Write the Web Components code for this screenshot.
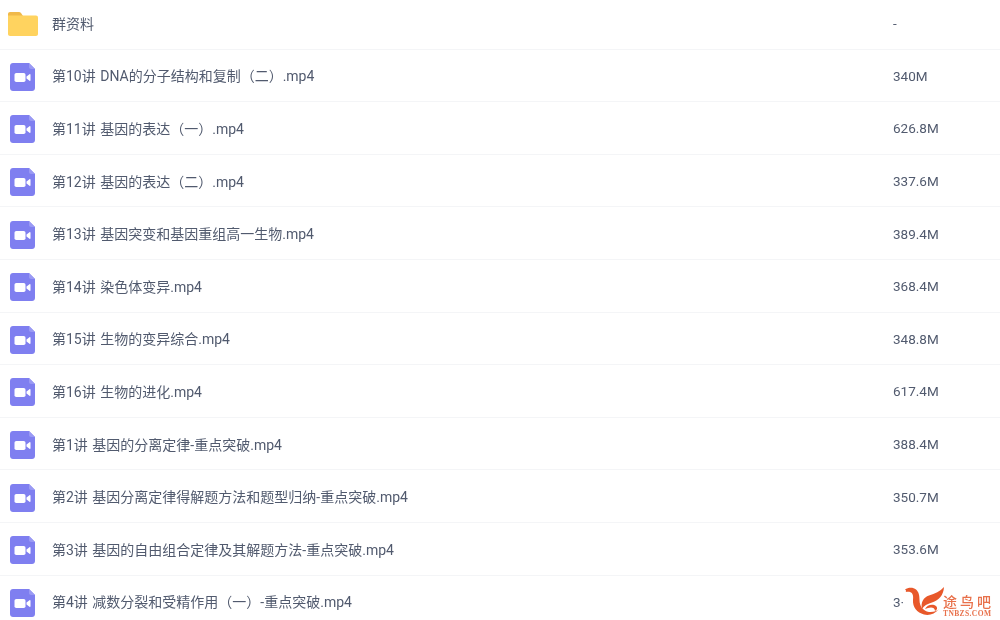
<!DOCTYPE html>
<html lang="zh">
<head>
<meta charset="utf-8">
<title>文件列表</title>
<style>
  html, body { margin: 0; height: 620px; overflow: hidden; background: #fff; }
</style>
</head>
<body>
<file-list>
  <file-row type="folder" name="群资料" size="-"></file-row>
  <file-row name="第10讲 DNA的分子结构和复制（二）.mp4" size="340M"></file-row>
  <file-row name="第11讲 基因的表达（一）.mp4" size="626.8M"></file-row>
  <file-row name="第12讲 基因的表达（二）.mp4" size="337.6M"></file-row>
  <file-row name="第13讲 基因突变和基因重组高一生物.mp4" size="389.4M"></file-row>
  <file-row name="第14讲 染色体变异.mp4" size="368.4M"></file-row>
  <file-row name="第15讲 生物的变异综合.mp4" size="348.8M"></file-row>
  <file-row name="第16讲 生物的进化.mp4" size="617.4M"></file-row>
  <file-row name="第1讲 基因的分离定律-重点突破.mp4" size="388.4M"></file-row>
  <file-row name="第2讲 基因分离定律得解题方法和题型归纳-重点突破.mp4" size="350.7M"></file-row>
  <file-row name="第3讲 基因的自由组合定律及其解题方法-重点突破.mp4" size="353.6M"></file-row>
  <file-row name="第4讲 减数分裂和受精作用（一）-重点突破.mp4" size="3·"></file-row>
</file-list>
<site-mark></site-mark>

<script>
// 文件列表容器
class FileList extends HTMLElement {
  constructor() {
    super();
    this.attachShadow({ mode: 'open' });
    this.shadowRoot.innerHTML = `
      <style>
        :host {
          display: flex;
          flex-direction: column;
          margin-top: -3px;
          font-family: Roboto, "Noto Sans CJK SC", sans-serif;
          font-size: 14px;
          color: #515a6e;
          filter: blur(.3px);
        }
      </style>
      <slot></slot>
    `;
  }
}

const ICONS = {
  folder: `
    <svg width="30" height="24" viewBox="0 0 30 24">
      <path d="M0 2C0 .9.900 0 2 0h9c.8 0 1.500.4 2 1l2 3H0z" fill="#f0b94a"/>
      <path d="M0 3.500h28c1.100 0 2 .9 2 2V22c0 1.100-.9 2-2 2H2c-1.100 0-2-.9-2-2z" fill="#ffd35f"/>
    </svg>`,
  video: `
    <svg width="25" height="28" viewBox="0 0 25 28">
      <path d="M3 0h16l6 6v19c0 1.700-1.300 3-3 3H3c-1.700 0-3-1.300-3-3V3c0-1.700 1.300-3 3-3z" fill="#7f7ff0"/>
      <path d="M19 0l6 6h-4c-1.100 0-2-.9-2-2z" fill="#9a9af4"/>
      <rect x="4.500" y="10" width="11" height="9" rx="1.800" fill="#fff"/>
      <path d="M16.500 13.500l3-2.200c.5-.4 1-.1 1 .5v5.400c0 .6-.5.900-1 .5l-3-2.200z" fill="#fff"/>
    </svg>`
};

// 单行文件
class FileRow extends HTMLElement {
  constructor() {
    super();
    this.attachShadow({ mode: 'open' });
  }

  connectedCallback() {
    const type = this.getAttribute('type') || 'video';
    this.shadowRoot.innerHTML = `
      <style>
        :host {
          display: grid;
          grid-template-columns: 52px 841px 1fr;
          align-items: center;
          height: 52.6px;
          box-sizing: border-box;
          border-bottom: 1px solid #f4f5f7;
        }
        .icon {
          display: flex;
          padding: ${type === 'folder' ? 2 : 3}px 0 0 ${type === 'folder' ? 8 : 10}px;
        }
        svg { display: block; }
        .name { word-spacing: 1px; }
        .size { font-size: 13.5px; padding-top: 1px; }
      </style>
      <div class="icon">${ICONS[type]}</div>
      <div class="name">${this.getAttribute('name')}</div>
      <div class="size">${this.getAttribute('size')}</div>
    `;
  }
}

// 右下角水印
class SiteMark extends HTMLElement {
  constructor() {
    super();
    this.attachShadow({ mode: 'open' });
    this.shadowRoot.innerHTML = `
      <style>
        :host {
          position: absolute;
          left: 905px;
          top: 587px;
          display: flex;
          align-items: flex-start;
          color: #e8704a;
          filter: blur(.3px);
        }
        svg { flex: none; display: block; }
        .txt {
          display: flex;
          flex-direction: column;
          margin: 8px 0 0 -1px;
        }
        .cn {
          font: 500 14px/13px "Noto Sans CJK SC", sans-serif;
          letter-spacing: 3px;
        }
        .en {
          font: bold 7.500px/7px "Liberation Serif", serif;
          letter-spacing: .4px;
          margin-top: 2px;
        }
      </style>
      <svg width="39" height="29" viewBox="0 0 39 29">
        <path d="M0 2.500C3 .5 8 0 11 2.500C14 5 14.500 9 14.500 13C14.500 19 18 24 24 25C28 25.500 32 24 34 22C30 27 24 29 19 27.500C12 25.500 7.500 20 8 13C8.500 9 8 6 5 5C3.500 4.500 2 5 .5 5C1.500 4.500 1 3 0 2.500z" fill="#e8582a"/>
        <path d="M39 0C38.500 8 34 13.500 27 15.500C22 17 19 18.500 17 22C15.500 15 18.500 10.500 24 8.500C30 6.500 35 4.500 39 0z" fill="#e8582a"/>
        <path d="M20 22C22 17.500 28 16.500 31 19C33 21 32 23 30 24C30 21.500 28 20.500 26 20.500C24 20.500 22 21 20 22z" fill="#e8582a"/>
      </svg>
      <div class="txt">
        <span class="cn">途鸟吧</span>
        <span class="en">TNBZS.COM</span>
      </div>
    `;
  }
}

customElements.define('file-list', FileList);
customElements.define('file-row', FileRow);
customElements.define('site-mark', SiteMark);
</script>
</body>
</html>
